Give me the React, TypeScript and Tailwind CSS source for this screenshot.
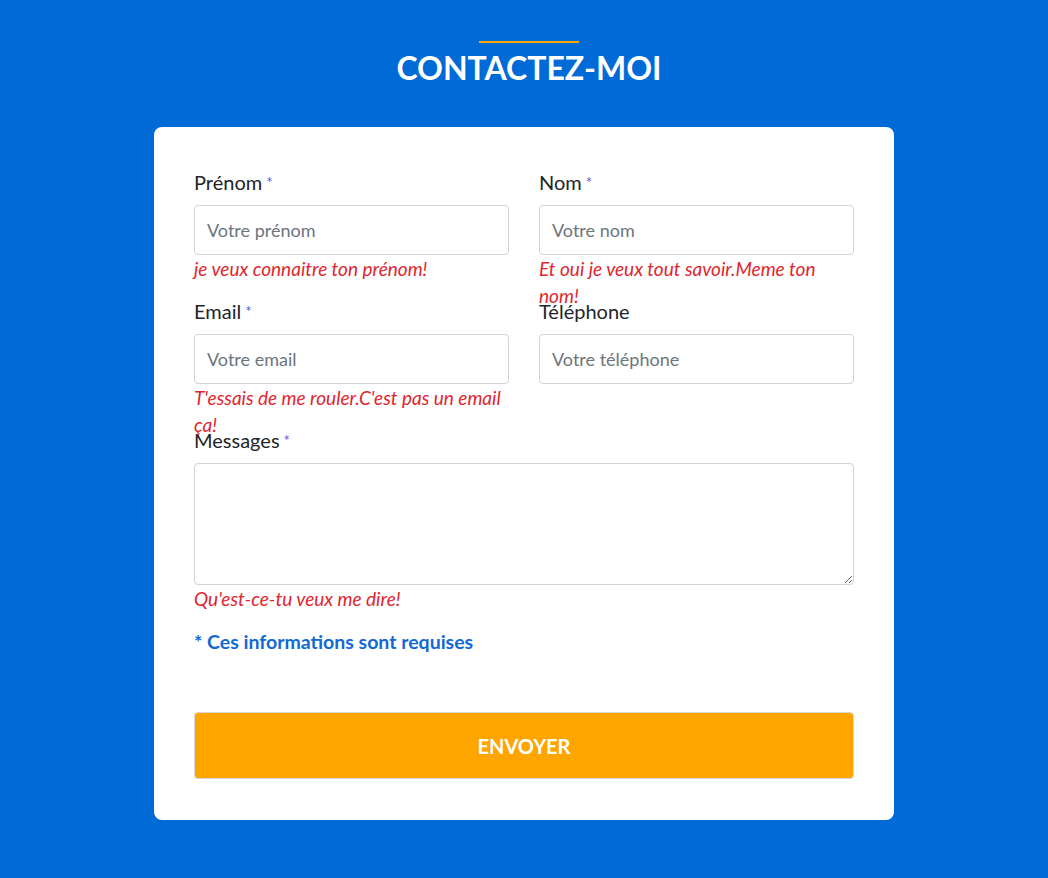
import React from "react";

const font = { fontFamily: "Lato, 'Open Sans', sans-serif" };

function Field({
  label,
  required,
  placeholder,
  error,
}: {
  label: string;
  required?: boolean;
  placeholder: string;
  error?: string;
}) {
  return (
    <div className="relative h-[129px]">
      <label className="block h-[27px] pt-[2px] text-[20px] leading-[27px] text-[#212529]">
        {label}
        {required && <span className="ml-1 align-top text-[15px] text-[#4a63d8]">*</span>}
      </label>
      <input
        placeholder={placeholder}
        className="mt-[11px] block h-[50px] w-full rounded-[4px] border border-[#ced4da] bg-white px-3 text-[18px] text-[#495057] outline-none placeholder:text-[#6c757d]"
      />
      {/* error message overflows into the next row, like the original */}
      {error && (
        <p className="absolute left-0 right-0 top-[88px] text-[19px] italic leading-[27px] text-[#e0262e]">
          {error}
        </p>
      )}
    </div>
  );
}

export default function App() {
  return (
    <div className="min-h-[878px] bg-[#006ad6] pt-[41px]" style={font}>
      <div className="flex flex-col items-center pl-[10px]">
        <div className="h-[2px] w-[100px] bg-[#f5a800]" />
        <h2 className="mt-[6px] text-[32px] font-bold leading-[38px] text-white">CONTACTEZ-MOI</h2>
      </div>

      <form className="mx-auto mt-[40px] w-[740px] rounded-[8px] bg-white px-[40px] pb-[41px] pt-[40px]">
        <div className="grid grid-cols-2 gap-x-[30px]">
          <Field label="Prénom" required placeholder="Votre prénom" error="je veux connaitre ton prénom!" />
          <Field label="Nom" required placeholder="Votre nom" error="Et oui je veux tout savoir.Meme ton nom!" />
          <Field label="Email" required placeholder="Votre email" error="T'essais de me rouler.C'est pas un email ça!" />
          <Field label="Téléphone" placeholder="Votre téléphone" />
        </div>

        <label className="block h-[27px] pt-[2px] text-[20px] leading-[27px] text-[#212529]">
          Messages<span className="ml-1 align-top text-[15px] text-[#4a63d8]">*</span>
        </label>
        <textarea className="mt-[11px] block h-[122px] w-full resize-y rounded-[4px] border border-[#ced4da] px-3 py-2 text-[18px] outline-none" />
        <p className="text-[19px] italic leading-[27px] text-[#e0262e]">Qu'est-ce-tu veux me dire!</p>

        <p className="mt-[17px] text-[19.5px] font-bold leading-[26px] text-[#1369d3]">* Ces informations sont requises</p>

        <button
          type="button"
          className="mt-[57px] block h-[67px] w-full rounded-[4px] border border-[#d6d6d6] bg-[#ffa500] text-[20px] font-bold text-white"
        >
          ENVOYER
        </button>
      </form>
    </div>
  );
}
